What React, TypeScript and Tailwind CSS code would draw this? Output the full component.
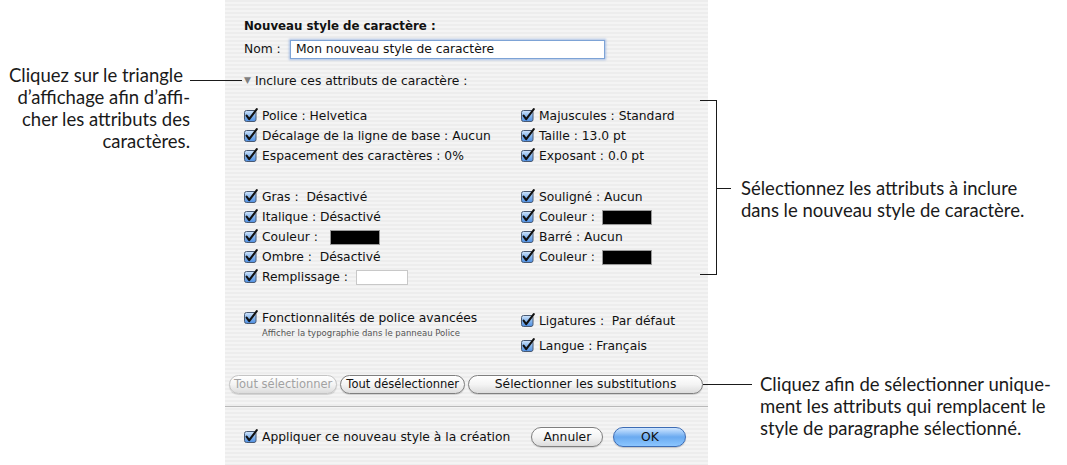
import React from "react";

const dlg = "font-['DejaVu_Sans',sans-serif] text-[12.3px] text-[#111]";
const note = "font-['Lato','Open_Sans',sans-serif] text-[18.5px] leading-[22px] text-[#1a1a1a]";

function Check() {
  return (
    <svg width="14" height="14" viewBox="0 0 14 14" className="shrink-0 -mt-[2px]">
      <defs>
        <linearGradient id="cbfill" x1="0" y1="0" x2="0" y2="1">
          <stop offset="0" stopColor="#d3e6fb" />
          <stop offset="0.5" stopColor="#86b6ee" />
          <stop offset="1" stopColor="#4d8de0" />
        </linearGradient>
      </defs>
      <rect x="0.5" y="2.5" width="11.5" height="11" rx="2" fill="url(#cbfill)" stroke="#4a5a72" />
      <path d="M2.6 7.6 L5.2 11.2 L12.8 1.2" stroke="#111" strokeWidth="2.1" fill="none" strokeLinecap="round" strokeLinejoin="round" />
    </svg>
  );
}

function Swatch({ white, w = "w-[50px]", ml = "ml-[10px]" }: { white?: boolean; w?: string; ml?: string }) {
  return (
    <span
      className={`inline-block ${w} h-[15px] ${ml} border ${
        white ? "bg-white border-[#c8c8c8]" : "bg-black border-[#9a9a9a]"
      }`}
    />
  );
}

function Row({ children }: { children: React.ReactNode }) {
  return (
    <div className="h-5 flex items-center gap-[4px] whitespace-nowrap">
      <Check />
      <span className="flex items-center">{children}</span>
    </div>
  );
}

function Pill({
  children,
  cls,
  disabled,
  h = "h-[19px]",
}: {
  children: React.ReactNode;
  cls: string;
  disabled?: boolean;
  h?: string;
}) {
  return (
    <button
      className={`${cls} ${h} whitespace-nowrap rounded-full border flex items-center justify-center bg-gradient-to-b from-white via-[#f4f4f4] to-[#dcdcdc] shadow-[0_1px_1px_rgba(0,0,0,0.15)] ${
        disabled ? "border-[#c4c4c4] text-[#a2a2a2]" : "border-[#7f7f7f] text-[#111]"
      }`}
    >
      {children}
    </button>
  );
}

export default function App() {
  return (
    <div className="relative w-[1067px] h-[465px] bg-white flex overflow-hidden">
      {/* left note */}
      <div className={`w-[225px] shrink-0 pt-[64px] ${note}`}>
        <div className="w-[190px] text-right whitespace-nowrap">
          <div className="pr-[7px]">Cliquez sur le triangle</div>
          <div>d’affichage afin d’affi-</div>
          <div>cher les attributs des</div>
          <div>caractères.</div>
        </div>
      </div>

      {/* dialog */}
      <div
        className={`w-[483px] shrink-0 h-full flex flex-col bg-[repeating-linear-gradient(180deg,#ededed_0px,#ededed_2px,#f4f4f4_2px,#f4f4f4_4px)] ${dlg}`}
      >
        <div className="pl-[19px] pt-[18px]">
          <div className="h-[18px] flex items-center font-bold text-[11.8px]">Nouveau style de caractère :</div>
          <div className="mt-[4px] h-[18px] flex items-center">
            <span className="w-[46px]">Nom :</span>
            <div className="w-[315px] h-[19px] bg-white border border-[#7da3d6] shadow-[0_0_2px_1px_rgba(110,150,215,0.55)] flex items-center pl-[5px]">
              Mon nouveau style de caractère
            </div>
          </div>
          <div className="mt-[14px] h-[18px] flex items-center">
            <span className="text-[#808080] text-[9px] mr-[4px]">▼</span>
            Inclure ces attributs de caractère :
          </div>

          <div className="mt-[16px] flex">
            <div className="w-[277px] flex flex-col">
              <Row>Police : Helvetica</Row>
              <Row>Décalage de la ligne de base : Aucun</Row>
              <Row>Espacement des caractères : 0%</Row>
              <div className="h-[21px]" />
              <Row>Gras :&nbsp; Désactivé</Row>
              <Row>Italique : Désactivé</Row>
              <Row>
                Couleur : <Swatch ml="ml-[12px]" />
              </Row>
              <Row>Ombre :&nbsp; Désactivé</Row>
              <Row>
                Remplissage : <Swatch white w="w-[52px]" ml="ml-[8px]" />
              </Row>
              <div className="h-[21px]" />
              <Row>Fonctionnalités de police avancées</Row>
              <div className="pl-[18px] h-[10px] leading-[10px] text-[8.5px] text-[#555]">
                Afficher la typographie dans le panneau Police
              </div>
            </div>
            <div className="flex flex-col">
              <Row>Majuscules : Standard</Row>
              <Row>Taille : 13.0 pt</Row>
              <Row>Exposant : 0.0 pt</Row>
              <div className="h-[21px]" />
              <Row>Souligné : Aucun</Row>
              <Row>
                Couleur : <Swatch ml="ml-[7px]" />
              </Row>
              <Row>Barré : Aucun</Row>
              <Row>
                Couleur : <Swatch ml="ml-[7px]" />
              </Row>
              <div className="h-[44px]" />
              <Row>Ligatures :&nbsp; Par défaut</Row>
              <div className="h-[5px]" />
              <Row>Langue : Français</Row>
            </div>
          </div>
        </div>

        <div className="mt-[19px] pl-[4px] pr-[5px] flex gap-[3px] text-[11.5px]">
          <Pill cls="px-[4px]" disabled>
            Tout sélectionner
          </Pill>
          <Pill cls="px-[5px]">Tout désélectionner</Pill>
          <Pill cls="flex-1 text-[12.3px]">Sélectionner les substitutions</Pill>
        </div>

        <div className="mt-[12px] h-px bg-[#b9b9b9]" />

        <div className="mt-[20px] pl-[19px] flex items-center">
          <Row>Appliquer ce nouveau style à la création</Row>
          <div className="ml-[21px]">
            <Pill cls="w-[72px]" h="h-[20px]">
              Annuler
            </Pill>
          </div>
          <button className="ml-[10px] w-[73px] h-[20px] rounded-full border border-[#3d6cb4] bg-gradient-to-b from-[#cfe6ff] via-[#6aaaf0] to-[#8cc6ff] text-[#111] shadow-[0_1px_1px_rgba(0,0,0,0.2)]">
            OK
          </button>
        </div>
      </div>

      {/* right notes */}
      <div className={`flex flex-col ${note}`}>
        <div className="ml-[33px] mt-[177px] whitespace-nowrap">
          <div>Sélectionnez les attributs à inclure</div>
          <div>dans le nouveau style de caractère.</div>
        </div>
        <div className="ml-[52px] mt-[152px] whitespace-nowrap">
          <div>Cliquez afin de sélectionner unique-</div>
          <div>ment les attributs qui remplacent le</div>
          <div>style de paragraphe sélectionné.</div>
        </div>
      </div>

      {/* leader lines */}
      <div className="absolute left-[190px] top-[80px] w-[52px] h-px bg-[#1a1a1a]" />
      <div className="absolute left-[700px] top-[100px] w-[17px] h-[175px] border-t border-r border-b border-[#1a1a1a]" />
      <div className="absolute left-[717px] top-[188px] w-[14px] h-px bg-[#1a1a1a]" />
      <div className="absolute left-[703px] top-[384px] w-[49px] h-px bg-[#1a1a1a]" />
    </div>
  );
}
